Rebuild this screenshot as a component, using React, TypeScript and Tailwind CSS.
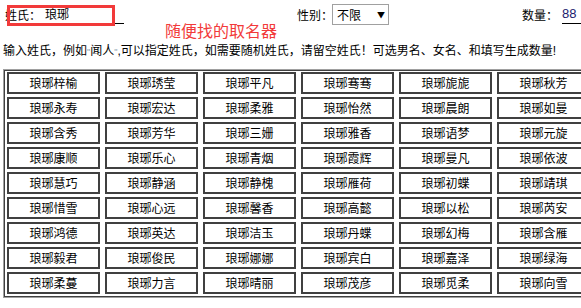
import React from "react";

const names: string[] = [
  "梓榆", "琇莹", "平凡", "骞骞", "旎旎", "秋芳",
  "永寿", "宏达", "柔雅", "怡然", "晨朗", "如曼",
  "含秀", "芳华", "三姗", "雅香", "语梦", "元旋",
  "康顺", "乐心", "青烟", "霞辉", "曼凡", "依波",
  "慧巧", "静涵", "静槐", "雁荷", "初蝶", "靖琪",
  "惜雪", "心远", "馨香", "高懿", "以松", "芮安",
  "鸿德", "英达", "洁玉", "丹蝶", "幻梅", "含雁",
  "毅君", "俊民", "娜娜", "宾白", "嘉泽", "绿海",
  "柔蔓", "力言", "晴丽", "茂彦", "觅柔", "向雪",
];

export default function App() {
  return (
    <div
      className="relative w-[581px] h-[308px] overflow-hidden bg-white text-black text-[12px] leading-[14px]"
      style={{ fontFamily: '"Noto Sans CJK SC", "Noto Sans", sans-serif' }}
    >
      {/* top row */}
      <div className="flex items-center h-[29px] pl-[5px] whitespace-nowrap w-[640px]">
        <span className="shrink-0 w-[36px]">姓氏：</span>
        <div className="shrink-0 ml-[4px] w-[79px] h-[18px] border-b border-black flex items-center">
          <span>琅琊</span>
        </div>
        <span className="shrink-0 ml-[173px] w-[36px]">性别：</span>
        <div className="shrink-0 ml-[-1px] w-[57px] h-[21px] border border-[#a0a0a0] flex items-center pl-[4px]">
          <span>不限</span>
          <span className="ml-[16px] text-[8px]">▼</span>
        </div>
        <span className="shrink-0 ml-[133px] w-[36px]">数量：</span>
        <div className="shrink-0 ml-[4px] w-[40px] h-[18px] border-b border-black flex items-center">
          <span className="text-[#1c1c6e]" style={{ fontFamily: '"Liberation Sans", sans-serif', fontSize: 13 }}>88</span>
        </div>
      </div>

      {/* hint line */}
      <div className="mt-[14px] pl-[3px] whitespace-nowrap h-[14px]">
        输入姓氏，例如<span className="text-[#8aa0b0] text-[9px]" style={{ fontFamily: '"Liberation Sans", sans-serif' }}>&quot;</span>闻人<span className="text-[#8aa0b0] text-[9px]" style={{ fontFamily: '"Liberation Sans", sans-serif' }}>&quot;</span>
        <span style={{ fontFamily: '"Liberation Sans", sans-serif' }}>,</span>可以指定姓氏，如需要随机姓氏，请留空姓氏！可选男名、女名、和填写生成数量
        <span style={{ fontFamily: '"Liberation Sans", sans-serif' }}>!</span>
      </div>

      {/* name grid */}
      <div className="mt-[12px] ml-[3px] w-[600px] border border-[#a0a0a0]">
        <div className="border border-[#404040] pt-[1px] pl-[2px] pb-[2px] grid grid-cols-[repeat(6,93px)] gap-x-[5px] gap-y-[3px]">
          {names.map((n, i) => (
            <div
              key={i}
              className="h-[22px] border-2 border-[#404040] flex items-center justify-center text-[12px]"
            >
              琅琊{n}
            </div>
          ))}
        </div>
      </div>

      {/* annotations */}
      <div className="absolute left-[7px] top-[5px] w-[108px] h-[21px] border-[3px] border-[#f23a3a]" />
      <div className="absolute left-[165px] top-[21px] text-[16px] leading-[18px] text-[#f23a3a] whitespace-nowrap">
        随便找的取名器
      </div>
    </div>
  );
}
